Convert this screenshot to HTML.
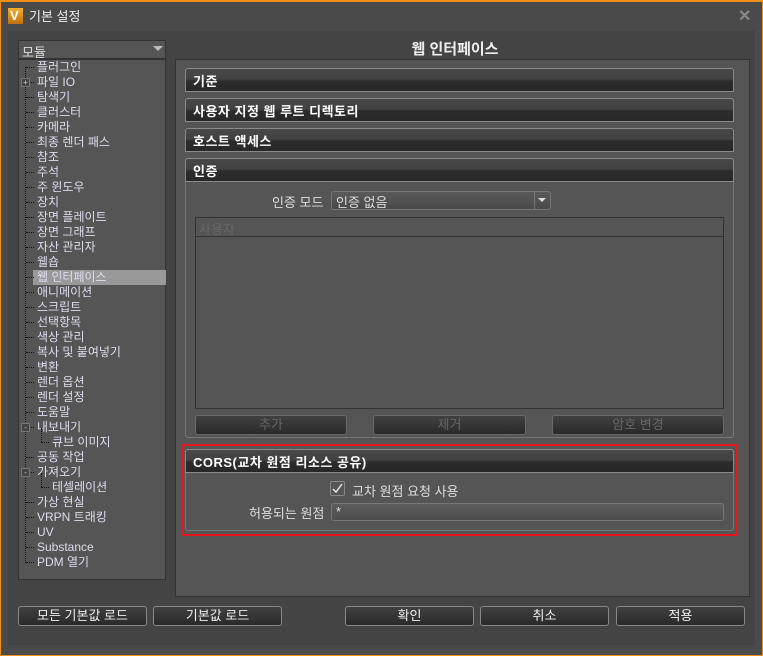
<!DOCTYPE html>
<html><head><meta charset="utf-8"><style>
*{margin:0;padding:0;box-sizing:border-box}
body{width:763px;height:656px;background:#4a4a4a;font-family:"Liberation Sans","Noto Sans CJK KR","NanumGothic",sans-serif;font-size:12px;color:#ddd;position:relative;overflow:hidden}
.a{position:absolute}
.win{left:0;top:0;width:763px;height:656px;border:1px solid #f0901a;border-top-width:2px}
.hdr{position:absolute;left:185px;width:549px;height:24px;border:1px solid #8a8a8a;border-radius:3px 3px 0 0;background:linear-gradient(#484848 0,#424242 45%,#2c2c2c 55%,#282828 100%);color:#fff;font-weight:bold;font-size:13px;padding:2px 0 0 7px;letter-spacing:.5px}
.btn{position:absolute;height:20px;border:1px solid #888;border-radius:3px;background:linear-gradient(#404040,#2a2a2a);color:#eee;text-align:center;font-size:13px;line-height:18px}
.btn.d{color:#666;border-color:#6a6a6a}
.t{position:absolute;left:37px;font-size:12px;line-height:15px;color:#dde}
</style></head><body>
<div class="a win"></div>
<div class="a" style="left:8px;top:8px;width:15px;height:16px;background:linear-gradient(#f0b030,#c07010)"></div>
<div class="a" style="left:10px;top:8px;font-weight:bold;color:#fff;font-size:13px">V</div>
<div class="a" style="left:29px;top:6px;font-size:13px;color:#eee">기본 설정</div>
<div class="a" style="left:738px;top:6px;font-size:16px;color:#888;font-weight:bold">✕</div>
<div class="a" style="left:8px;top:31px;width:747px;height:614px;background:#444"></div>
<!-- combo -->
<div class="a" style="left:18px;top:40px;width:148px;height:19px;background:#555;border:1px solid #333;font-size:13px;padding:1px 3px">모듈</div>
<div class="a" style="left:153px;top:46px;width:0;height:0;border-left:5px solid transparent;border-right:5px solid transparent;border-top:5px solid #bbb"></div>
<!-- tree -->
<div class="a" style="left:18px;top:59px;width:148px;height:521px;background:#555;border:1px solid #333"></div>
<div class="a" style="left:25px;top:67px;width:0;height:361px;border-left:1px dotted #111"></div>
<div class="a" style="left:25px;top:428px;width:0;height:135px;border-left:1px dotted #111"></div>
<div class="a" style="left:33px;top:270px;width:133px;height:15px;background:#999"></div>
<div id="tree"></div>
<!-- right panel -->
<div class="a" style="left:175px;top:59px;width:575px;height:538px;background:#555;border:1px solid #333"></div>
<div class="a" style="left:175px;top:38px;width:560px;text-align:center;font-size:15px;font-weight:bold;color:#eee">웹 인터페이스</div>
<div class="hdr" style="top:68px">기준</div>
<div class="hdr" style="top:98px">사용자 지정 웹 루트 디렉토리</div>
<div class="hdr" style="top:128px">호스트 액세스</div>
<div class="a" style="left:185px;top:158px;width:549px;height:280px;border:1px solid #777;border-radius:3px"></div>
<div class="hdr" style="top:158px">인증</div>
<div class="a" style="left:272px;top:192px;font-size:13px">인증 모드</div>
<div class="a" style="left:331px;top:191px;width:220px;height:19px;border:1px solid #777;border-radius:3px;background:linear-gradient(#5a5a5a,#4a4a4a);font-size:13px;padding:0 4px">인증 없음</div>
<div class="a" style="left:534px;top:192px;width:1px;height:17px;background:#777"></div>
<div class="a" style="left:538px;top:198px;width:0;height:0;border-left:4px solid transparent;border-right:4px solid transparent;border-top:4px solid #ddd"></div>
<div class="a" style="left:195px;top:217px;width:529px;height:192px;border:1px solid #333;background:#555"></div>
<div class="a" style="left:196px;top:218px;width:527px;height:19px;border-bottom:1px solid #333;color:#666;padding:1px 3px;font-size:13px">사용자</div>
<div class="btn d" style="left:195px;top:415px;width:152px">추가</div>
<div class="btn d" style="left:373px;top:415px;width:153px">제거</div>
<div class="btn d" style="left:552px;top:415px;width:172px">암호 변경</div>
<!-- CORS -->
<div class="a" style="left:181px;top:444px;width:556px;height:92px;border:2px solid #e8141c"></div>
<div class="a" style="left:185px;top:449px;width:549px;height:82px;border:1px solid #777;border-radius:3px"></div>
<div class="hdr" style="top:449px">CORS(교차 원점 리소스 공유)</div>
<div class="a" style="left:330px;top:481px;width:15px;height:15px;border:1px solid #888;border-radius:2px;background:#555"></div>
<svg class="a" style="left:331px;top:482px" width="13" height="13"><path d="M2 7 L5 10 L11 2" stroke="#eee" stroke-width="1.4" fill="none"/></svg>
<div class="a" style="left:352px;top:481px;font-size:13px">교차 원점 요청 사용</div>
<div class="a" style="left:249px;top:503px;font-size:13px">허용되는 원점</div>
<div class="a" style="left:331px;top:503px;width:393px;height:18px;border:1px solid #777;border-radius:3px;background:linear-gradient(#5e5e5e,#4e4e4e);padding:0 4px;font-size:13px">*</div>
<!-- bottom -->
<div class="btn" style="left:18px;top:606px;width:129px">모든 기본값 로드</div>
<div class="btn" style="left:153px;top:606px;width:129px">기본값 로드</div>
<div class="btn" style="left:345px;top:606px;width:129px">확인</div>
<div class="btn" style="left:480px;top:606px;width:129px">취소</div>
<div class="btn" style="left:616px;top:606px;width:129px">적용</div>
<script>
var items=["플러그인","파일 IO","탐색기","클러스터","카메라","최종 렌더 패스","참조","주석","주 윈도우","장치","장면 플레이트","장면 그래프","자산 관리자","웰숍","웹 인터페이스","애니메이션","스크립트","선택항목","색상 관리","복사 및 붙여넣기","변환","렌더 옵션","렌더 설정","도움말","내보내기","큐브 이미지","공동 작업","가져오기","테셀레이션","가상 현실","VRPN 트래킹","UV","Substance","PDM 열기"];
var h="";
items.forEach(function(s,i){var y=60+i*15;var sub=(i==25||i==28);var x=sub?52:37;
h+='<div class="t" style="top:'+y+'px;left:'+x+'px">'+s+'</div>';
h+='<div class="a" style="top:'+(y+7)+'px;left:'+(sub?41:26)+'px;width:8px;border-top:1px dotted #111"></div>';
if(sub)h+='<div class="a" style="top:'+(y-7)+'px;left:41px;height:14px;border-left:1px dotted #111"></div>';
if(i==1||i==24||i==27)h+='<div class="a" style="top:'+(y+3)+'px;left:21px;width:9px;height:9px;background:#444;border:1px solid #777;font-size:8px;line-height:7px;text-align:center;color:#ccc">'+(i==1?'+':'-')+'</div>';
});
document.getElementById("tree").innerHTML=h;
</script>
</body></html>
